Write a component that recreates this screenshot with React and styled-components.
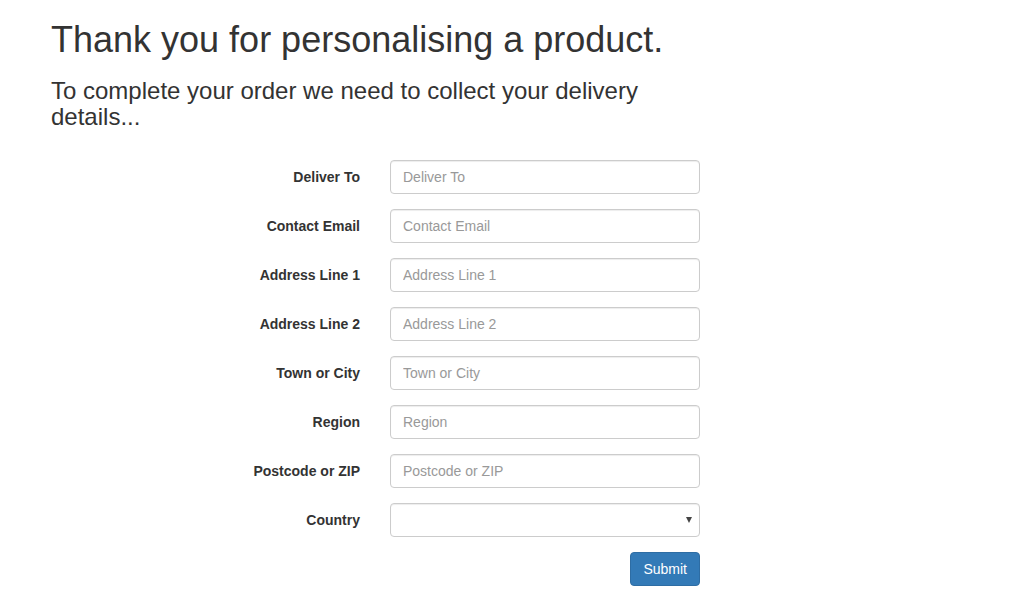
import React from "react";
import styled, { createGlobalStyle } from "styled-components";

const GlobalStyle = createGlobalStyle`
    html, body {
        margin: 0;
        padding: 0;
        background: #ffffff;
    }
    body {
        font-family: "Liberation Sans", Arial, sans-serif;
        font-size: 14px;
        line-height: 1.42857;
        color: #333333;
    }
    * {
        box-sizing: border-box;
    }
`;

const Page = styled.div`
    padding-left: 51px;
    padding-bottom: 28px;
`;

const Header = styled.div`
    width: 640px;
`;

const Title = styled.h1`
    font-size: 36px;
    font-weight: 500;
    line-height: 1.1;
    margin: 20px 0 10px;
`;

const SubTitle = styled.h3`
    font-size: 24px;
    font-weight: 500;
    line-height: 1.1;
    margin: 18px 0 10px;
`;

const Form = styled.form`
    width: 649px;
    margin-top: 30px;
`;

const FormRow = styled.div`
    display: grid;
    grid-template-columns: 1fr 310px;
    column-gap: 30px;
    margin-bottom: 15px;
`;

const Label = styled.label`
    text-align: right;
    font-weight: 700;
    padding-top: 8px;
    white-space: nowrap;
`;

const Input = styled.input`
    display: block;
    width: 100%;
    height: 34px;
    padding: 6px 12px;
    font-family: inherit;
    font-size: 14px;
    color: #555555;
    background: #ffffff;
    border: 1px solid #cccccc;
    border-radius: 4px;
    box-shadow: inset 0 1px 1px rgba(0, 0, 0, 0.075);
    outline: none;

    &::placeholder {
        color: #999999;
    }
`;

const SelectWrap = styled.div`
    position: relative;
`;

const Select = styled.select`
    display: block;
    width: 100%;
    height: 34px;
    padding: 6px 12px;
    font-family: inherit;
    font-size: 14px;
    color: #555555;
    background: #ffffff;
    border: 1px solid #cccccc;
    border-radius: 4px;
    box-shadow: inset 0 1px 1px rgba(0, 0, 0, 0.075);
    appearance: none;
    -webkit-appearance: none;
    outline: none;
`;

const Caret = styled.span`
    position: absolute;
    right: 8px;
    top: 14px;
    width: 0;
    height: 0;
    border-left: 3.5px solid transparent;
    border-right: 3.5px solid transparent;
    border-top: 6px solid #444444;
    pointer-events: none;
`;

const Actions = styled.div`
    display: flex;
    justify-content: flex-end;
`;

const Button = styled.button`
    font-family: inherit;
    font-size: 14px;
    line-height: 20px;
    height: 34px;
    padding: 6px 12px;
    color: #ffffff;
    background-color: #337ab7;
    border: 1px solid #2e6da4;
    border-radius: 4px;
    cursor: pointer;
`;

const fields = [
    "Deliver To",
    "Contact Email",
    "Address Line 1",
    "Address Line 2",
    "Town or City",
    "Region",
    "Postcode or ZIP",
];

function App() {
    return (
        <Page>
            <GlobalStyle />
            <Header>
                <Title>Thank you for personalising a product.</Title>
                <SubTitle>To complete your order we need to collect your delivery details...</SubTitle>
            </Header>
            <Form onSubmit={(e) => e.preventDefault()}>
                {fields.map((f) => (
                    <FormRow key={f}>
                        <Label>{f}</Label>
                        <Input type="text" placeholder={f} />
                    </FormRow>
                ))}
                <FormRow>
                    <Label>Country</Label>
                    <SelectWrap>
                        <Select defaultValue="">
                            <option value=""></option>
                        </Select>
                        <Caret />
                    </SelectWrap>
                </FormRow>
                <Actions>
                    <Button type="submit">Submit</Button>
                </Actions>
            </Form>
        </Page>
    );
}

export default App;
